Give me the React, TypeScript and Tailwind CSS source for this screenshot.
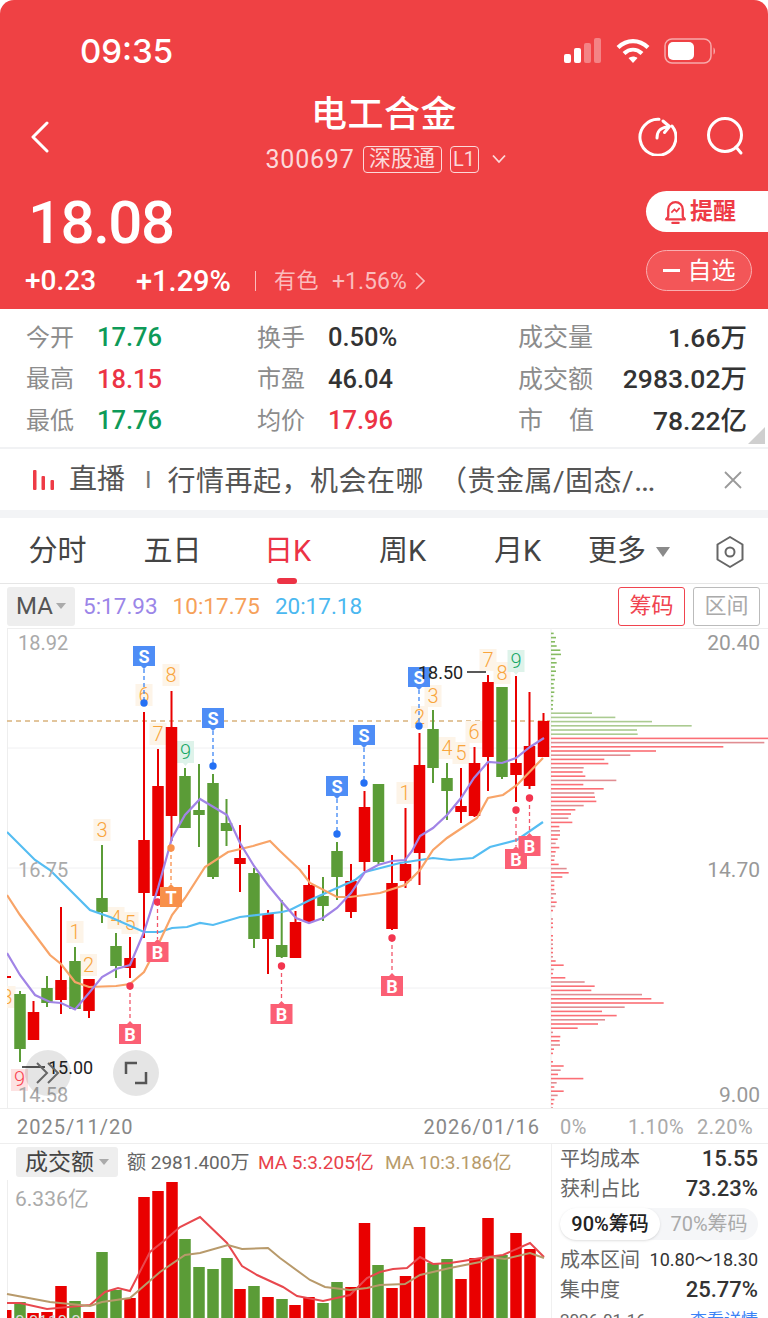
const candles: [number, "r" | "g", number, number, number, number][] = [
  [20, "g", 991, 994, 1049, 1062],
  [33.5, "r", 1001, 1012, 1040, 1040],
  [47, "g", 976, 988, 1003, 1007],
  [61, "r", 907, 980, 1000, 1014],
  [75, "g", 947, 961, 1009, 1009],
  [89, "r", 979, 979, 1011, 1018],
  [102, "g", 845, 898, 912, 923],
  [116, "g", 933, 946, 966, 978],
  [130, "r", 937, 958, 968, 978],
  [144, "r", 712, 840, 893, 938],
  [158, "r", 749, 786, 896, 896],
  [171.5, "r", 691, 727, 816, 841],
  [185, "g", 768, 776, 828, 828],
  [199, "g", 764, 810, 815, 847],
  [213, "g", 774, 783, 877, 879],
  [226.5, "g", 799, 823, 831, 846],
  [240, "r", 825, 858, 864, 892],
  [254, "g", 868, 873, 939, 948],
  [268, "r", 910, 914, 939, 974],
  [281.7, "g", 900, 945, 957, 958],
  [295.5, "r", 911, 922, 958, 958],
  [309, "r", 865, 885, 922, 922],
  [323, "g", 877, 896, 906, 921],
  [337, "g", 842, 851, 877, 900],
  [351, "r", 864, 881, 912, 918],
  [364.5, "r", 791, 807, 862, 871],
  [378.5, "g", 784, 784, 862, 864],
  [392, "r", 855, 883, 929, 930],
  [405.5, "r", 808, 864, 881, 888],
  [419.5, "r", 733, 765, 853, 885],
  [433, "g", 710, 729, 768, 783],
  [447, "g", 763, 778, 791, 820],
  [461, "r", 768, 806, 812, 823],
  [474.5, "r", 747, 763, 816, 817],
  [488, "r", 675, 682, 757, 791],
  [502, "g", 687, 687, 777, 779],
  [516, "r", 676, 763, 775, 802],
  [529.5, "r", 692, 746, 786, 789],
  [543.5, "r", 713, 721, 757, 757],
];

const ma5 = "7,953 20,975 35,995 50,1002 61,1003 75,1009.5 89,993 102,977 116,969 130,965 144,932 158,888 172,838 185,815 200,799 227,815 240,843 254,866 268,885 282,902 296,918 309,923 323,918 337,908 351,893 365,872 378,865 392,861 405,860 412,851 420,836 433,828 447,815 461,798 474,778 488,762 502,763 516,758 530,747 544,738";
const ma10 = "7,895 20,915 35,935 50,955 61,964 75,982 89,987 116,986 130,984 144,972 158,945 172,915 185,898 205,867 228,852 253,846 270,841 280,851 300,870 310,883 337,897 350,897 380,893 405,885 420,870 433,850 447,838 477,818 488,798 503,795 517,785 543,758";
const ma20 = "7,832 35,860 50,870 90,910 110,917 144,932 160,932 172,928 187,927 200,923 213,925 240,917 282,912 290,910 310,900 355,880 365,872 400,863 433,858 450,860 473,858 490,847 517,840 543,822";

const volBars: [number, "r" | "g", number][] = [
  [7, "r", 1310], [20, "g", 1302], [33, "r", 1313], [47, "r", 1312], [61, "r", 1286], [75, "g", 1301], [89, "r", 1312], [102, "g", 1252],
  [116, "g", 1290], [130, "r", 1298], [144, "r", 1197], [158, "r", 1191], [172, "r", 1182], [185, "g", 1239], [199, "g", 1267], [213, "g", 1269],
  [227, "g", 1258], [240, "r", 1289], [254, "g", 1286], [268, "r", 1297], [282, "g", 1299], [295, "r", 1305], [309, "r", 1297], [323, "g", 1303],
  [337, "g", 1282], [351, "r", 1287], [364.5, "r", 1223], [378, "g", 1265], [392, "r", 1288], [405.5, "r", 1276], [419.5, "r", 1227], [433, "g", 1263],
  [447, "g", 1259], [461, "r", 1279], [475, "r", 1258], [488, "r", 1218], [502, "g", 1255], [516, "r", 1233], [530, "r", 1249],
];
const volMa5 = "7,1303 20,1303 47,1309 90,1305 105,1292 118,1288 130,1291 150,1252 165,1240 180,1227 200,1217 227,1243 242,1266 257,1275 283,1287 297,1296 323,1301 350,1295 367,1278 380,1272 393,1269 407,1268 420,1257 433,1264 450,1263 463,1261 487,1257 503,1255 530,1243 544,1257";
const volMa10 = "7,1294 50,1302 90,1306 102,1302 130,1298 160,1272 185,1255 200,1253 228,1245 242,1249 268,1248 280,1258 310,1280 325,1287 350,1290 367,1288 380,1285 405,1284 420,1275 450,1268 480,1262 490,1257 505,1259 530,1253 544,1258";

const chipGreen = [8, 15, 12, 17, 28, 30, 13, 17, 12, 15, 10, 12, 8, 10, 10, 7, 7, 6, 6, 123, 193, 303, 422, 258, 260];
const chipRed = [
  651, 640, 517, 315, 238, 160, 172, 98, 95, 103, 196, 97, 158, 130, 132, 136, 98, 73, 60, 52, 64, 25, 27, 27, 20, 14, 25, 14, 12, 10, 23, 47, 53, 34, 10, 10, 10, 15, 7, 17, 13, 6, 0, 6, 6, 6, 0, 6, 6, 6, 6, 6, 6, 14, 38, 8, 6, 43, 101, 131, 121, 273, 301, 338, 221, 153, 197, 162, 141, 80, 6, 28, 26, 27, 9, 6, 0, 6, 38, 29, 21, 97, 17, 10, 38, 20, 10, 7, 6,
];

const numbers: [number, number, string][] = [
  [7, 997, "3"], [102, 830, "3"], [75, 932, "1"], [88.5, 965, "2"], [116, 918, "4"], [130, 923, "5"], [144, 695, "6"], [158, 734, "7"], [171, 675, "8"],
  [405, 793, "1"], [419.5, 717, "2"], [433, 696, "3"], [447, 748, "4"], [461, 753, "5"], [474, 732, "6"], [488, 660, "7"], [502, 673, "8"],
];
const sells: [number, number, number][] = [
  [144, 657, 703], [213, 719, 766], [364, 736, 783], [337, 787, 834], [419, 678, 726],
];
const buys: [number, number, number][] = [
  [130, 1033, 986], [157.5, 951, 902], [281.5, 1013, 966], [392, 985, 938], [516, 858, 810], [529.5, 845, 798],
];

function Tag9({ x, y, fill, color }: { x: number; y: number; fill: string; color: string }) {
  return (
    <g>
      <path d={`M${x - 8.5} ${y - 11}h17v22h-6l-2.5 3-2.5-3h-6z`} fill={fill} />
      <text x={x} y={y + 7} textAnchor="middle" fontSize={20} fontWeight={300} fill={color}>9</text>
    </g>
  );
}

function KChart() {
  return (
    <svg viewBox="0 628 768 480" className="block w-[768px] h-[480px]">
      <defs>
        <clipPath id="plot">
          <rect x={7} y={628} width={544} height={480} />
        </clipPath>
      </defs>
      <line x1={7} x2={768} y1={628.5} y2={628.5} stroke="#eeeeee" />
      {[748, 868, 988].map((y) => (
        <line key={y} x1={7} x2={551} y1={y} y2={y} stroke="#f0f0f2" strokeWidth={1} />
      ))}
      <line x1={7.5} x2={7.5} y1={628} y2={1108} stroke="#eeeeee" />
      <line x1={551} x2={551} y1={628} y2={1108} stroke="#f0f0f0" />
      <line x1={7} x2={550} y1={721} y2={721} stroke="#d9b27c" strokeWidth={1.3} strokeDasharray="5 4" />

      {chipGreen.map((w, i) => (
        <rect key={i} x={551} y={632.6 + i * 4.2} width={w / 3} height={1.6} fill={i < 19 ? "#86bb62" : "#abcb91"} />
      ))}
      {chipRed.map((w, i) => (
        <rect key={i} x={551} y={737.6 + i * 4.2} width={w / 3} height={1.6} fill={i % 3 === 1 ? "#e08d92" : "#fb6f76"} />
      ))}

      <g clipPath="url(#plot)">
        {numbers.map(([x, y, n], i) => (
          <g key={i}>
            <rect x={x - 8.5} y={y - 11} width={17} height={22} fill="#fdf4e8" />
            <text x={x} y={y + 7} textAnchor="middle" fontSize={20} fontWeight={300} fill="#f9a53c">{n}</text>
          </g>
        ))}
        <Tag9 x={185.5} y={752} fill="#def3ea" color="#16a765" />
        <Tag9 x={516} y={661} fill="#def3ea" color="#16a765" />
        <rect x={11} y={1069} width={17} height={22} fill="#fde2e2" />
        <text x={19.5} y={1086} textAnchor="middle" fontSize={20} fontWeight={300} fill="#f9434f">9</text>

        {candles.map(([x, c, hi, top, bottom, lo], i) => {
          const color = c === "r" ? "#e90000" : "#5b9c37";
          return (
            <g key={i}>
              <rect x={x - 1} y={hi} width={2} height={lo - hi} fill={color} />
              <rect x={x - 5.75} y={top} width={11.5} height={bottom - top} fill={color} />
            </g>
          );
        })}
        <polyline points={ma20} fill="none" stroke="#55bdf2" strokeWidth={2.2} />
        <polyline points={ma10} fill="none" stroke="#f8a468" strokeWidth={2.2} />
        <polyline points={ma5} fill="none" stroke="#a184e6" strokeWidth={2.2} />
        <rect x={7} y={976} width={4} height={2} fill="#e90000" />
      </g>

      {sells.map(([x, y, dot], i) => (
        <g key={i}>
          <line x1={x} x2={x} y1={y + 12} y2={dot} stroke="#3d86f5" strokeWidth={1.3} strokeDasharray="4 3" />
          <circle cx={x} cy={dot} r={3.7} fill="#2470f4" />
          <path d={`M${x - 11} ${y - 11}h22v20h-8l-3 3-3-3h-8z`} fill="#4e8df6" />
          <text x={x} y={y + 6} textAnchor="middle" fontSize={18} fontWeight={700} fill="#fff">S</text>
        </g>
      ))}
      {buys.map(([x, y, dot], i) => (
        <g key={i}>
          <line x1={x} x2={x} y1={dot} y2={y - 12} stroke="#f2566a" strokeWidth={1.3} strokeDasharray="4 3" />
          <circle cx={x} cy={dot} r={3.7} fill="#f3354f" />
          <path d={`M${x - 11} ${y - 9}h8l3-3 3 3h8v20h-22z`} fill="#fb5f74" />
          <text x={x} y={y + 8} textAnchor="middle" fontSize={18} fontWeight={700} fill="#fff">B</text>
        </g>
      ))}
      <line x1={171} x2={171} y1={848} y2={884} stroke="#f8904a" strokeWidth={1.3} strokeDasharray="4 3" />
      <circle cx={171} cy={848} r={3.7} fill="#f8904a" />
      <path d="M160 887h8l3-3 3 3h8v20h-22z" fill="#f8904a" />
      <text x={171} y={904} textAnchor="middle" fontSize={18} fontWeight={700} fill="#fff">T</text>

      <text x={18} y={650} fontSize={20} fill="#aaaaaa">18.92</text>
      <text x={18} y={877} fontSize={20} fill="#aaaaaa">16.75</text>
      <text x={18} y={1102} fontSize={20} fill="#aaaaaa">14.58</text>
      <text x={760} y={650} textAnchor="end" fontSize={21} fill="#999999">20.40</text>
      <text x={760} y={877} textAnchor="end" fontSize={21} fill="#999999">14.70</text>
      <text x={760} y={1102} textAnchor="end" fontSize={21} fill="#999999">9.00</text>

      <text x={418} y={679} fontSize={18} fill="#222222">18.50</text>
      <line x1={467} x2={486} y1={672} y2={672} stroke="#222222" strokeWidth={1.5} />
      <line x1={22} x2={45} y1={1067} y2={1067} stroke="#222222" strokeWidth={1.5} />
      <text x={48} y={1074} fontSize={18} fill="#222222">15.00</text>
    </svg>
  );
}

function VolumeChart() {
  return (
    <svg viewBox="0 1180 551 138" className="block w-[551px] h-[138px]">
      <line x1={7.5} x2={7.5} y1={1180} y2={1318} stroke="#eeeeee" />
      {volBars.map(([x, c, top], i) => (
        <rect key={i} x={x < 10 ? 7 : x - 5.75} y={top} width={x < 10 ? 4.5 : 11.5} height={1318 - top} fill={c === "r" ? "#e90000" : "#5b9c37"} />
      ))}
      <polyline points={volMa5} fill="none" stroke="#e8484e" strokeWidth={2} />
      <polyline points={volMa10} fill="none" stroke="#b89a6b" strokeWidth={2} />
      <text x={15} y={1206} fontSize={21} fill="#aaaaaa">6.336亿</text>
      <text x={15} y={1327} fontSize={17} fill="#d8dcd8">0  0110  0</text>
    </svg>
  );
}

function Stat({ label, value, color }: { label: string; value: string; color: string }) {
  return (
    <div className="flex h-[41.5px] items-center">
      <span className="w-[71px] text-[24px] leading-none text-[#8c8c8c]">{label}</span>
      <span className={`text-[25.5px] leading-none font-medium ${color}`}>{value}</span>
    </div>
  );
}

function StatRight({ label, value }: { label: string[]; value: string }) {
  return (
    <div className="flex h-[41.5px] items-center justify-between">
      <span className="flex w-[76px] justify-between text-[25px] leading-none text-[#8c8c8c]">
        {label.map((part) => (
          <span key={part}>{part}</span>
        ))}
      </span>
      <span className="text-[26.5px] leading-none font-medium text-[#333333]">{value}</span>
    </div>
  );
}

export default function App() {
  return (
    <div className="relative w-[768px] h-[1318px] overflow-hidden bg-white font-['Roboto','Noto_Sans_CJK_SC',sans-serif]">
      <header className="flex h-[309px] flex-col rounded-t-[14px] bg-[#ef4144] text-white">
        <div className="mt-[36px] flex h-[30px] items-center justify-between pr-[52px] pl-[80px]">
          <span className="mt-[1px] font-['Inter',sans-serif] text-[33px] leading-none font-medium">09:35</span>
          <div className="flex items-center gap-[12px]">
            <svg width="40" height="26" viewBox="0 0 40 26">
              <rect x="0" y="16" width="7" height="9" rx="2" fill="#fff" />
              <rect x="10" y="10" width="7" height="15" rx="2" fill="#fff" />
              <rect x="20" y="5" width="7" height="20" rx="2" fill="#ffffff" fillOpacity=".35" />
              <rect x="30" y="0" width="7" height="25" rx="2" fill="#ffffff" fillOpacity=".35" />
            </svg>
            <svg width="34" height="26" viewBox="0 0 34 26" fill="none" stroke="#fff" strokeWidth="4.2">
              <path d="M2 9.5C11 1 23 1 32 9.5" />
              <path d="M8 15.5c5.500-5 12.500-5 18 0" />
              <path d="M17 25l-4.500-5c2.800-2 6.200-2 9 0z" fill="#fff" stroke="none" />
            </svg>
            <svg width="52" height="26" viewBox="0 0 52 26" fill="none" className="ml-[2px]">
              <rect x="1" y="1" width="46" height="24" rx="7" stroke="#ffffff" strokeOpacity=".55" strokeWidth="1.5" />
              <rect x="4" y="4" width="26" height="18" rx="5" fill="#fff" />
              <path d="M49.500 9.500c2 1 2 6 0 7z" fill="#ffffff" fillOpacity=".55" />
            </svg>
          </div>
        </div>

        <div className="mt-[24px] flex h-[86px] items-center">
          <div className="flex w-[140px] pl-[30px]">
            <svg width="20" height="32" viewBox="0 0 20 32" fill="none" stroke="#fff" strokeWidth="3" strokeLinecap="round" strokeLinejoin="round" className="mt-[8px]">
              <path d="M17 2L3 16l14 14" />
            </svg>
          </div>
          <div className="flex flex-1 flex-col items-center">
            <div className="text-[36px] leading-[46px] font-medium tracking-[0.5px]">电工合金</div>
            <div className="mt-[6px] ml-[3px] flex h-[30px] items-center text-[#fcd9da]">
              <span className="text-[25px] leading-none tracking-[0.8px]">300697</span>
              <span className="ml-[8px] flex h-[27px] w-[79px] items-center justify-center rounded-[4px] border border-[#fcd9da] text-[22px] leading-none">深股通</span>
              <span className="ml-[8px] flex h-[27px] w-[29px] items-center justify-center rounded-[4px] border border-[#fcd9da] text-[20px] leading-none">L1</span>
              <svg width="14" height="10" viewBox="0 0 14 10" fill="none" stroke="#fcd9da" strokeWidth="1.8" className="ml-[13px]">
                <path d="M1 1.500l6 6.500 6-6.500" />
              </svg>
            </div>
          </div>
          <div className="mt-[6px] flex w-[140px] items-center justify-end gap-[29px] pr-[22px]">
            <svg width="40" height="40" viewBox="0 0 40 40" fill="none" stroke="#fff" strokeWidth="3" strokeLinecap="round">
              <path d="M22 3.300A18 18 0 1 0 35 10" />
              <path d="M20 22c0-7 3-10 10-11" />
              <path d="M26 5l6.500 5.500-5 6" strokeLinejoin="round" />
            </svg>
            <svg width="40" height="40" viewBox="0 0 40 40" fill="none" stroke="#fff" strokeWidth="3" strokeLinecap="round">
              <circle cx="19" cy="19" r="16.500" />
              <path d="M30 31l5 6" />
            </svg>
          </div>
        </div>

        <div className="mt-[15px] flex flex-1 justify-between">
          <div className="pl-[26px]">
            <div className="ml-[2px] text-[60px] leading-[64px] font-medium tracking-[-1.5px]">18.08</div>
            <div className="mt-[11px] flex h-[30px] items-center text-[#fcd9da]">
              <span className="-ml-[1px] w-[111px] text-[28px] font-medium leading-none text-white">+0.23</span>
              <span className="w-[119px] text-[29px] font-medium leading-none text-white">+1.29%</span>
              <span className="h-[20px] w-px bg-[#fbbcbd]" />
              <span className="ml-[18px] text-[22px] leading-none tracking-[0.5px] text-[#fbbcbd]">有色</span>
              <span className="ml-[13px] text-[23px] leading-none text-[#fbbcbd]">+1.56%</span>
              <svg width="10" height="18" viewBox="0 0 10 18" fill="none" stroke="#fbbcbd" strokeWidth="1.6" className="ml-[8px]">
                <path d="M1 1l8 8-8 8" />
              </svg>
            </div>
          </div>
          <div className="flex flex-col items-end">
            <div className="flex h-[41px] w-[122px] items-center gap-[3px] rounded-l-full bg-white pl-[18px] text-[23px] leading-none font-bold text-[#ee3b46]">
              <svg width="23" height="27" viewBox="0 0 22 26" fill="none" stroke="#ee3b46" strokeWidth="2.2">
                <path d="M4 18V11a7 7 0 0 1 14 0v7l2 2.500H2z" strokeLinejoin="round" />
                <path d="M8 24h6" strokeLinecap="round" />
                <path d="M7 14l3-3 2 2 3-3.500" strokeWidth="1.6" />
              </svg>
              提醒
            </div>
            <div className="mt-[18px] mr-[16px] flex h-[41px] w-[106px] items-center justify-center gap-[8px] rounded-full border border-[#f9aeb0] bg-[#f35658] text-[24px] leading-none">
              <span className="h-[2.5px] w-[17px] bg-white" />
              自选
            </div>
          </div>
        </div>
      </header>

      <section className="relative grid h-[138px] grid-cols-[231px_261px_1fr] pt-[8px] pr-[21px] pl-[26px]">
        <div>
          <Stat label="今开" value="17.76" color="text-[#0e9a58]" />
          <Stat label="最高" value="18.15" color="text-[#ec3345]" />
          <Stat label="最低" value="17.76" color="text-[#0e9a58]" />
        </div>
        <div>
          <Stat label="换手" value="0.50%" color="text-[#333333]" />
          <Stat label="市盈" value="46.04" color="text-[#333333]" />
          <Stat label="均价" value="17.96" color="text-[#ec3345]" />
        </div>
        <div>
          <StatRight label={["成交量"]} value="1.66万" />
          <StatRight label={["成交额"]} value="2983.02万" />
          <StatRight label={["市", "值"]} value="78.22亿" />
        </div>
        <span className="absolute right-[3px] bottom-[3px] h-[17px] w-[17px] bg-[#cfcfcf] [clip-path:polygon(100%_0,100%_100%,0_100%)]" />
      </section>

      <section className="flex h-[63px] items-center border-t-2 border-[#f1f2f4] pr-[25px] pl-[33px] text-[28px] leading-none text-[#555555]">
        <svg width="22" height="20" viewBox="0 0 22 20" className="shrink-0" fill="#ee3b46">
          <rect x="0" y="0" width="3.500" height="20" rx="1" />
          <rect x="8.500" y="6" width="3.500" height="14" rx="1" />
          <rect x="17.500" y="10" width="3.500" height="10" rx="1" />
        </svg>
        <span className="ml-[14px]">直播</span>
        <span className="ml-[20px] text-[24px] text-[#777777]">I</span>
        <span className="ml-[16px] flex-1 whitespace-pre tracking-[0.5px]">行情再起，机会在哪  （贵金属/固态/<span className="text-[32px] tracking-normal">…</span></span>
        <svg width="20" height="20" viewBox="0 0 20 20" fill="none" stroke="#9a9a9a" strokeWidth="1.8">
          <path d="M2 2l16 16M18 2L2 18" />
        </svg>
      </section>

      <div className="h-[8px] bg-[#f3f4f6]" />

      <nav className="grid h-[66px] grid-cols-[repeat(5,115px)_1fr] items-center border-b border-[#e6e6e6] pt-[2px] text-[29px] leading-none text-[#444444]">
        <span className="text-center">分时</span>
        <span className="text-center">五日</span>
        <span className="relative text-center text-[#ec3345]">
          日K
          <span className="absolute top-[41px] left-[47px] h-[6px] w-[20px] rounded-full bg-[#ec3345]" />
        </span>
        <span className="text-center">周K</span>
        <span className="text-center">月K</span>
        <div className="flex items-center pr-[23px] pl-[13px]">
          <span>更多</span>
          <span className="ml-[10px] h-0 w-0 border-x-[7.500px] border-t-[10px] border-x-transparent border-t-[#8a8a8a]" />
          <svg width="30" height="34" viewBox="0 0 30 34" fill="none" stroke="#666666" strokeWidth="2" className="ml-auto">
            <path d="M15 2l12.500 7.500v15L15 32 2.500 24.500v-15z" strokeLinejoin="round" />
            <circle cx="15" cy="17" r="4.500" />
          </svg>
        </div>
      </nav>

      <div className="flex h-[44px] items-center pr-[8px] pl-[7px]">
        <div className="flex h-[39px] w-[68px] items-center justify-center gap-[3px] rounded-[3px] bg-[#eeeeee] text-[24px] leading-none text-[#555555]">
          MA
          <span className="h-0 w-0 border-x-[5px] border-t-[6px] border-x-transparent border-t-[#aaaaaa]" />
        </div>
        <div className="ml-[8px] flex gap-[15px] text-[22.5px] leading-none">
          <span className="text-[#9b86e8]">5:17.93</span>
          <span className="text-[#f6a15a]">10:17.75</span>
          <span className="text-[#4bb8f0]">20:17.18</span>
        </div>
        <div className="ml-auto flex gap-[8px] text-[22px] leading-none">
          <span className="flex h-[39px] w-[67px] items-center justify-center rounded-[3px] border border-[#f0444f] text-[#f0444f]">筹码</span>
          <span className="flex h-[39px] w-[67px] items-center justify-center rounded-[3px] border border-[#bbbbbb] text-[#aaaaaa]">区间</span>
        </div>
      </div>

      <div className="relative h-[480px]">
        <KChart />
        <button className="absolute top-[422px] left-[25px] flex h-[46px] w-[46px] items-center justify-center rounded-full bg-[#0000001a]">
          <svg width="26" height="24" viewBox="0 0 26 24" fill="none" stroke="#666666" strokeWidth="2">
            <path d="M2 2l10 10L2 22M13 2l10 10-10 10" />
          </svg>
        </button>
        <button className="absolute top-[422px] left-[113px] flex h-[46px] w-[46px] items-center justify-center rounded-full bg-[#0000001a]">
          <svg width="24" height="24" viewBox="0 0 24 24" fill="none" stroke="#555555" strokeWidth="2.500">
            <path d="M13 2H2v11M11 22h11V11" />
          </svg>
        </button>
      </div>

      <div className="flex h-[36px] items-center border-y border-[#eeeeee] pt-[1px] text-[20px] leading-none">
        <div className="flex w-[551px] justify-between pr-[11px] pl-[17px] tracking-[1px] text-[#888888]">
          <span>2025/11/20</span>
          <span>2026/01/16</span>
        </div>
        <div className="flex flex-1 pl-[9px] tracking-[0.5px] text-[#aaaaaa]">
          <span className="w-[68px]">0%</span>
          <span className="w-[69px]">1.10%</span>
          <span>2.20%</span>
        </div>
      </div>

      <div className="flex h-[174px]">
        <div className="w-[551px]">
          <div className="flex h-[36px] items-center pl-[16px] text-[19px] leading-none">
            <div className="flex h-[30px] w-[102px] items-center justify-center gap-[5px] rounded-[3px] bg-[#eeeeee] text-[23px] text-[#444444]">
              成交额
              <span className="h-0 w-0 border-x-[5px] border-t-[6px] border-x-transparent border-t-[#aaaaaa]" />
            </div>
            <span className="ml-[9px] w-[131px] text-[19px] whitespace-nowrap text-[#666666]">额 2981.400万</span>
            <span className="w-[127px] whitespace-nowrap text-[#e8414a]">MA 5:3.205亿</span>
            <span className="whitespace-nowrap text-[#b79b6b]">MA 10:3.186亿</span>
          </div>
          <VolumeChart />
        </div>
        <div className="flex-1 border-l border-[#f0f0f0] pr-[10px] pl-[8px] text-[20px] leading-none text-[#666666]">
          <div className="flex h-[30px] items-center justify-between">
            <span>平均成本</span>
            <span className="text-[22px] font-medium text-[#333333]">15.55</span>
          </div>
          <div className="flex h-[30px] items-center justify-between">
            <span>获利占比</span>
            <span className="text-[22px] font-medium text-[#333333]">73.23%</span>
          </div>
          <div className="mt-[4px] flex h-[32px] items-center rounded-full bg-[#f5f6f8] text-[#aaaaaa]">
            <span className="flex h-[32px] w-[100px] items-center justify-center rounded-full bg-white font-medium text-[#222222] shadow">90%筹码</span>
            <span className="flex-1 text-center">70%筹码</span>
          </div>
          <div className="mt-[5px] flex h-[30px] items-center justify-between">
            <span>成本区间</span>
            <span className="text-[18px] whitespace-nowrap text-[#333333]">10.80～18.30</span>
          </div>
          <div className="flex h-[30px] items-center justify-between">
            <span>集中度</span>
            <span className="text-[22px] font-medium text-[#333333]">25.77%</span>
          </div>
          <div className="flex h-[30px] items-center justify-between text-[17px]">
            <span>2026-01-16</span>
            <span className="text-[#3b82f6]">查看详情</span>
          </div>
        </div>
      </div>
    </div>
  );
}
